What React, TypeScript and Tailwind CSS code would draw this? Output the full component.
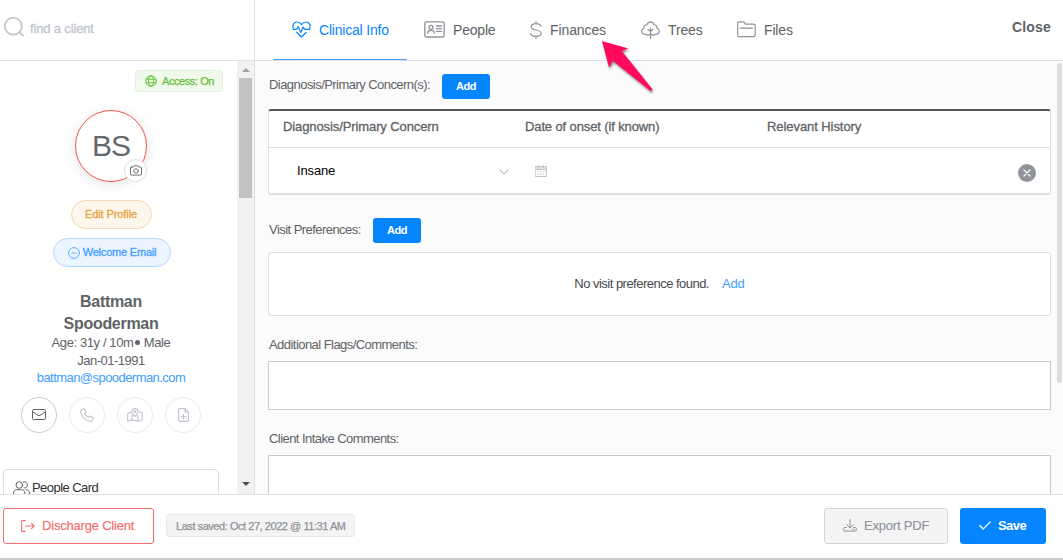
import React from 'react';

interface IconProps {
  className?: string;
}

interface TabItem {
  label: string;
  icon: React.ReactNode;
  className: string;
}

const stroke = {
  fill: 'none',
  stroke: 'currentColor',
  strokeLinecap: 'round' as const,
  strokeLinejoin: 'round' as const
};

const SearchIcon: React.FC<IconProps> = ({ className }) => (
  <svg viewBox="0 0 20 20" className={className} {...stroke} strokeWidth="1.7">
    <circle cx="9.3" cy="9.2" r="8.5" />
    <path d="M15.6 15.3l3.4 3.3" />
  </svg>
);

const HeartPulseIcon: React.FC<IconProps> = ({ className }) => (
  <svg viewBox="0 0 19 17" className={className} {...stroke} strokeWidth="1.2">
    <path d="M1.500 7.300C0 4.500 1.700 1 5 1c2 0 3.500 1 4.500 2.600C10.500 2 12 1 14 1c3.300 0 5 3.500 3.500 6.300M4.700 11.300l4.800 4.700 4.800-4.700" />
    <path d="M1.200 8.300h3.500l1.500-2.800 2.600 6 2.400-5.500 1.500 2.300h5" />
  </svg>
);

const PeopleIcon: React.FC<IconProps> = ({ className }) => (
  <svg viewBox="0 0 21 17" className={className} {...stroke} strokeWidth="1.3">
    <rect x=".8" y=".8" width="19.4" height="15.2" rx="1.6" />
    <circle cx="7" cy="6.3" r="2" />
    <path d="M3.600 12.300c.2-1.900 1.500-2.900 3.400-2.900s3.200 1 3.400 2.900M12.500 5h5M12.500 7.700h5M12.500 10.400h5" />
  </svg>
);

const DollarIcon: React.FC<IconProps> = ({ className }) => (
  <svg viewBox="0 0 12 18" className={className} {...stroke} strokeWidth="1.2">
    <path d="M6 .6v2M6 15.400v2M10.900 5.300C10.400 3.500 8.700 2.600 6 2.600c-3 0-4.800 1.100-4.800 3.100C1.200 7.700 3 8.400 6 9c3.200.6 5.100 1.400 5.100 3.300 0 2-2 3.100-5.100 3.100-3 0-4.800-.9-5.400-2.700" />
  </svg>
);

const TreeIcon: React.FC<IconProps> = ({ className }) => (
  <svg viewBox="0 0 19 18" className={className} {...stroke} strokeWidth="1.2">
    <path d="M8.300 13.500C7.300 14.500 5.700 14.300 5 13.300 2.600 13.800.7 12.200.7 10.300c0-1.500.9-2.600 2.200-3-.3-2 1-3.500 3-3.500C6.500 1.900 7.800.8 9.500.8s3 1.100 3.600 3c2 0 3.300 1.500 3 3.500 1.300.4 2.200 1.500 2.200 3 0 1.900-1.900 3.500-4.300 3-.7 1-2.300 1.200-3.300.2" />
    <path d="M9.500 7v10.400M9.500 10.600L6.900 8.300M9.500 10.600l2.600-2.300" />
  </svg>
);

const FolderIcon: React.FC<IconProps> = ({ className }) => (
  <svg viewBox="0 0 19 17" className={className} {...stroke} strokeWidth="1.2">
    <path d="M.7 14V2.200C.7 1.300 1.300.8 2.100.8h4.700l1.700 2.400h8c1.100 0 1.700.6 1.700 1.600V14c0 1.100-.6 1.700-1.700 1.700h-14C1.300 15.700.7 15.100.7 14zM3.300 7.200h12.300" />
  </svg>
);

const GlobeIcon: React.FC<IconProps> = ({ className }) => (
  <svg viewBox="0 0 12 12" className={className} {...stroke} strokeWidth="1">
    <circle cx="6" cy="6" r="5.300" />
    <ellipse cx="6" cy="6" rx="2.500" ry="5.300" />
    <path d="M1.200 4.200h9.600M1.200 7.800h9.600" />
  </svg>
);

const CameraIcon: React.FC<IconProps> = ({ className }) => (
  <svg viewBox="0 0 12 11" className={className} {...stroke} strokeWidth="0.9">
    <path d="M1.500 2.100h1.700L4 .8h4l.8 1.300h1.700c.6 0 1 .3 1 .9v6.200c0 .6-.4.9-1 .9h-9c-.6 0-1-.3-1-.9V3c0-.6.400-.9 1-.9z" />
    <circle cx="6" cy="5.900" r="2.200" />
  </svg>
);

const MailIcon: React.FC<IconProps> = ({ className }) => (
  <svg viewBox="0 0 14 11" className={className} {...stroke} strokeWidth="1">
    <rect x=".5" y=".5" width="13" height="10" rx="1.200" />
    <path d="M.8 3l5.200 3.400c.7.400 1.300.400 2 0L13.200 3" />
  </svg>
);

const PhoneIcon: React.FC<IconProps> = ({ className }) => (
  <svg viewBox="0 0 14 14" className={className} {...stroke} strokeWidth="1.1">
    <path d="M3.400.8L1.300 1.900C.6 2.300.6 3 .7 3.800c.8 4.700 4.700 8.700 9.500 9.500.8.100 1.500.100 1.900-.600l1.100-2.100c.2-.400.100-.800-.3-1L10.400 8.200c-.4-.2-.8-.1-1.100.2l-.8 1C6.800 8.600 5.400 7.200 4.600 5.500l1-.8c.3-.3.400-.7.200-1.100L4.400 1.100c-.2-.400-.6-.5-1-.3z" />
  </svg>
);

const MapIcon: React.FC<IconProps> = ({ className }) => (
  <svg viewBox="0 0 16 14" className={className} {...stroke} strokeWidth="1.1">
    <path d="M8 8.600C6 6.600 4.900 5.300 4.900 3.800 4.900 2 6.300.6 8 .6s3.100 1.400 3.100 3.200c0 1.500-1.100 2.800-3.100 4.800z" />
    <circle cx="8" cy="3.700" r=".8" />
    <path d="M4 4.300L.7 5.400v7.800l4.300-1.300 6 1.300 4.300-1.200V4.300l-3-.4M5 7v4.900M11 7.500v5.700" />
  </svg>
);

const FileAddIcon: React.FC<IconProps> = ({ className }) => (
  <svg viewBox="0 0 11 14" className={className} {...stroke} strokeWidth="1.1">
    <path d="M.6 12.200V1.800C.6 1 1 .6 1.800.6H7l3.400 3.500v8.100c0 .8-.4 1.200-1.200 1.200H1.800C1 13.400.6 13 .6 12.200zM7 .8v3.500h3.300M5.500 6.300v4.800M3.100 8.700h4.800" />
  </svg>
);

const UsersIcon: React.FC<IconProps> = ({ className }) => (
  <svg viewBox="0 0 17 14" className={className} {...stroke} strokeWidth="1">
    <circle cx="6.300" cy="4" r="3.300" />
    <path d="M.6 13.500V12C.6 9.800 2 8.700 4 8.700h4.500c2 0 3.400 1.100 3.400 3.300v1.500M10.400.9c2-.6 4 .7 4 2.900 0 1.800-1.300 3.200-3.100 3.200M13 8.700c2.200.1 3.400 1.300 3.400 3.300v1.500" />
  </svg>
);

const CalendarIcon: React.FC<IconProps> = ({ className }) => (
  <svg viewBox="0 0 12 12" className={className} {...stroke} strokeWidth="1">
    <rect x=".5" y="1.500" width="11" height="10" />
    <path d="M.5 4.500h11M1 3h10M3.500.5v2M8.500.5v2" />
    <path d="M2.500 6.800h7M2.500 9.200h7" strokeDasharray="1.500 1.200" strokeLinecap="butt" />
  </svg>
);

const ExitIcon: React.FC<IconProps> = ({ className }) => (
  <svg viewBox="0 0 14 12" className={className} {...stroke} strokeWidth="1.100">
    <path d="M4.200.6H1.600c-.6 0-1 .4-1 1v8.800c0 .6.400 1 1 1h2.600M4.500 6h8.700M10.500 3.300L13.200 6l-2.700 2.700" />
  </svg>
);

const ExportIcon: React.FC<IconProps> = ({ className }) => (
  <svg viewBox="0 0 14 13" className={className} {...stroke} strokeWidth="1">
    <path d="M7 .5v8.300M3.800 5.700L7 8.900l3.200-3.200M3.500 8.500H1.800c-.7 0-1.200.5-1.200 1.200v1.200c0 .7.500 1.200 1.200 1.200h10.400c.7 0 1.200-.5 1.200-1.200V9.700c0-.7-.5-1.200-1.200-1.200h-1.700M9.700 10.300h1.500" />
  </svg>
);

const tabs: TabItem[] = [
  { label: 'Clinical Info', icon: <HeartPulseIcon className="h-[17px] w-[19px]" />, className: 'w-[134px] pl-[19px] text-[#0a84ff] border-[#409eff] tracking-[-0.2px]' },
  { label: 'People', icon: <PeopleIcon className="h-[17px] w-[21px] text-[#909399]" />, className: 'w-[106px] pl-[17px] border-transparent tracking-[-0.2px]' },
  { label: 'Finances', icon: <DollarIcon className="h-[18px] w-3 text-[#909399]" />, className: 'w-[111px] pl-[17px] border-transparent tracking-[-0.1px]' },
  { label: 'Trees', icon: <TreeIcon className="h-[18px] w-[19px] text-[#909399]" />, className: 'w-24 pl-[17px] border-transparent tracking-[-0.15px]' },
  { label: 'Files', icon: <FolderIcon className="h-[17px] w-[19px] text-[#909399]" />, className: 'w-[91px] pl-[17px] border-transparent tracking-[-0.15px]' }
];

const contactActions = [
  { name: 'mail', icon: <MailIcon className="h-[11px] w-3.5" />, className: 'border-[#c8cad3] text-[#606266]' },
  { name: 'phone', icon: <PhoneIcon className="size-3.5" />, className: 'border-[#e8eaf2] text-[#c0c4cc]' },
  { name: 'map', icon: <MapIcon className="h-3.5 w-4" />, className: 'border-[#e8eaf2] text-[#c0c4cc]' },
  { name: 'file', icon: <FileAddIcon className="h-3.5 w-[11px]" />, className: 'border-[#e8eaf2] text-[#c0c4cc]' }
];

const AddButton: React.FC = () => (
  <button className="h-[25px] w-12 rounded-[3px] bg-[#0585ff] text-[11px] font-bold tracking-[-0.5px] text-white">
    Add
  </button>
);

const Sidebar: React.FC = () => (
  <aside className="flex min-h-0 flex-1">
    <div className="flex w-[237px] flex-col overflow-hidden">
      <div className="mt-[9px] ml-[135px] flex h-[22px] w-[88px] shrink-0 items-center rounded-[3px] border border-[#e1f3d8] bg-[#f0f9eb] pl-[9px] text-[11px] tracking-[-0.43px] text-[#67c23a] [-webkit-text-stroke:0.25px]">
        <GlobeIcon className="mr-[5px] size-3" />
        Access: On
      </div>

      <div className="flex w-[222px] shrink-0 flex-col items-center">
        <div className="relative mt-[18px] flex size-[72px] items-center justify-center rounded-full border border-[#f9554a] bg-white pb-0.5 text-[30px] tracking-[-1px] text-[#66686b] shadow-[0_2px_12px_rgba(0,0,0,0.12)]">
          BS
          <span className="absolute -right-px -bottom-px flex size-[23px] items-center justify-center rounded-full border border-[#dcdfe6] bg-white">
            <CameraIcon className="h-[11px] w-3" />
          </span>
        </div>
        <button className="mt-[18px] h-[29px] w-[81px] rounded-full border border-[#f5dab1] bg-[#fdf6ec] text-[11px] tracking-[-0.1px] text-[#e6a23c] [-webkit-text-stroke:0.3px]">
          Edit Profile
        </button>
        <button className="mt-[9px] ml-0.5 flex h-[29px] w-[118px] items-center justify-center rounded-full border border-[#b3d8ff] bg-[#ecf5ff] text-[11px] tracking-[-0.2px] text-[#409eff] [-webkit-text-stroke:0.3px]">
          <svg viewBox="0 0 12 12" className="mr-[3px] size-3" {...stroke} strokeWidth="0.8">
            <circle cx="6" cy="6" r="5.400" />
            <path d="M3.700 6h4.600" />
          </svg>
          Welcome Email
        </button>

        <h2 className="mt-6 text-center text-base leading-[22px] font-bold tracking-[-0.3px]">
          Battman
          <br />
          Spooderman
        </h2>
        <div className="-mt-px text-center text-[13px] leading-[17.5px] tracking-[-0.4px]">
          <p>
            Age: 31y / 10m <span className="mx-[-1.5px] inline-block size-[5px] rounded-full bg-[#606266] align-[2px]" />{' '}
            <span className="ml-0.5">Male</span>
          </p>
          <p className="tracking-[-0.5px]">Jan-01-1991</p>
          <p className="tracking-[-0.55px] text-[#409eff]">battman@spooderman.com</p>
        </div>

        <div className="mt-[10px] flex gap-3">
          {contactActions.map((action) => (
            <button key={action.name} className={`flex size-9 items-center justify-center rounded-full border ${action.className}`}>
              {action.icon}
            </button>
          ))}
        </div>
      </div>

      <div className="mt-9 ml-[3px] flex h-12 w-[216px] shrink-0 rounded border border-[#dcdfe6] bg-white pt-[9px] pl-[9px] text-[13px] leading-[18px] tracking-[-0.55px] text-[#303133]">
        <UsersIcon className="mt-0.5 mr-0.5 h-3.5 w-[17px] text-[#606266]" />
        People Card
      </div>
    </div>

    {/* Scrollbar */}
    <div className="flex w-[17px] flex-col items-center bg-[#f1f1f1]">
      <svg viewBox="0 0 8 4" className="mt-[7px] mb-1.5 h-1 w-2 shrink-0" fill="#a3a3a3">
        <path d="M0 4l4-4 4 4z" />
      </svg>
      <div className="h-[120px] w-[13px] shrink-0 bg-[#c1c1c1]" />
      <svg viewBox="0 0 8 4" className="mt-auto mb-2 h-1 w-2 shrink-0" fill="#505050">
        <path d="M0 0l4 4 4-4z" />
      </svg>
    </div>
  </aside>
);

const ClinicalInfo: React.FC = () => (
  <main className="flex min-h-0 flex-1 justify-between overflow-hidden bg-[#fbfbfb]">
    <div className="ml-[13px] w-[783px] text-[13px] tracking-[-0.55px]">
      <div className="mt-[13px] flex h-[25px] items-center gap-3">
        <span className="w-[162px] pb-[3px] pl-px whitespace-nowrap">Diagnosis/Primary Concern(s):</span>
        <AddButton />
      </div>

      <div className="mt-[10px] h-[86px] rounded-[3px] border border-t-2 border-b-2 border-[#dfe0e2] border-t-[#545557] bg-white tracking-[-0.07px]">
        <div className="flex h-[37px] border-b border-[#dfe0e2] pl-3.5 leading-[31px] [-webkit-text-stroke:0.3px]">
          <span className="w-[242px] tracking-[-0.1px]">Diagnosis/Primary Concern</span>
          <span className="w-[242px] tracking-[-0.12px]">Date of onset (if known)</span>
          <span>Relevant History</span>
        </div>
        <div className="flex h-[45px] items-center pl-7">
          <span className="w-[202px] tracking-[-0.15px] text-black">Insane</span>
          <svg viewBox="0 0 10 6" className="mt-0.5 h-1.5 w-2.5 text-[#c0c4cc]" {...stroke} strokeWidth="1.1">
            <path d="M.6.6L5 5 9.400.6" />
          </svg>
          <CalendarIcon className="ml-[26px] size-3 text-[#c0c4cc]" />
          <button className="mt-[5px] mr-3.5 ml-auto flex size-[18px] items-center justify-center rounded-full bg-[#909399]">
            <svg viewBox="0 0 8 8" className="size-2 text-white" {...stroke} strokeWidth="1.3">
              <path d="M1 1l6 6M7 1L1 7" />
            </svg>
          </button>
        </div>
      </div>

      <div className="mt-[23px] flex h-[25px] items-center gap-3">
        <span className="w-[93px] pb-0.5 pl-px whitespace-nowrap">Visit Preferences:</span>
        <AddButton />
      </div>
      <div className="mt-[9px] flex h-16 items-center justify-center rounded-[3px] border border-[#dfe0e2] bg-white tracking-[-0.52px] text-[#484a4d]">
        No visit preference found.
        <a className="ml-[13px] tracking-[-0.15px] text-[#409eff]">Add</a>
      </div>

      <label className="mt-5 block pl-px leading-[18px]">Additional Flags/Comments:</label>
      <textarea className="mt-[7px] block h-[49px] w-full resize-none border border-[#c8c9cc] bg-white" />
      <label className="mt-5 block pl-px leading-[18px]">Client Intake Comments:</label>
      <textarea className="mt-[7px] block h-[49px] w-full resize-none border border-[#c8c9cc] bg-white" />
    </div>
    <div className="mt-0.5 mr-px h-80 w-[5px] rounded-full bg-[#dcdde0]" />
  </main>
);

const Footer: React.FC = () => (
  <footer className="flex h-16 shrink-0 items-center border-t border-[#dfe0e2] bg-white pb-0.5 pl-[3px] text-[13px]">
    <button className="flex h-9 w-[151px] items-center rounded-[3px] border border-[#f56c6c] pl-[17px] tracking-[-0.2px] text-[#f56c6c] [-webkit-text-stroke:0.15px]">
      <ExitIcon className="mr-[7px] h-3 w-3.5" />
      Discharge Client
    </button>
    <div className="ml-3 flex h-[23px] w-[189px] items-center rounded-[3px] border border-[#e9e9eb] bg-[#f4f4f5] pt-px pl-[9px] text-[11px] tracking-[-0.45px] whitespace-nowrap text-[#909399] [-webkit-text-stroke:0.25px]">
      Last saved: Oct 27, 2022 @ 11:31 AM
    </div>
    <button className="ml-auto flex h-9 w-[124px] items-center rounded-[3px] border border-[#d3d4d6] bg-[#f4f4f5] pl-[18px] tracking-[-0.2px] text-[#909399] [-webkit-text-stroke:0.15px]">
      <ExportIcon className="mr-[7px] h-[13px] w-3.5" />
      Export PDF
    </button>
    <button className="mr-[17px] ml-3 flex h-9 w-[86px] items-center rounded-[3px] bg-[#0585ff] pl-[19px] font-bold tracking-[-0.55px] text-white">
      <svg viewBox="0 0 12 9" className="mr-[7px] h-[9px] w-3" {...stroke} strokeWidth="1.2">
        <path d="M.7 4.500L4.200 8 11.300.8" />
      </svg>
      Save
    </button>
  </footer>
);

const App: React.FC = () => {
  return (
    <div className="relative flex h-[560px] w-[1063px] flex-col overflow-hidden bg-white font-['Liberation_Sans',Arial,sans-serif] text-[13px] text-[#606266]">
      <div className="flex min-h-0 flex-1">
        <div className="flex w-[255px] flex-col border-r border-[#dfe0e2]">
          <div className="flex h-[61px] shrink-0 items-center border-b border-[#dfe0e2] pb-1 pl-1 text-[#c0c4cc]">
            <SearchIcon className="mr-1.5 mb-0.5 size-5" />
            <span className="pt-0.5 tracking-[-0.15px] [-webkit-text-stroke:0.3px]">find a client</span>
          </div>
          <Sidebar />
        </div>

        <div className="flex min-w-0 flex-1 flex-col">
          <header className="flex h-[61px] shrink-0 justify-between border-b border-[#dfe0e2] pl-[18px]">
            <nav className="flex text-sm">
              {tabs.map((tab) => (
                <a key={tab.label} className={`flex h-[60px] items-center gap-2 border-b ${tab.className}`}>
                  {tab.icon}
                  {tab.label}
                </a>
              ))}
            </nav>
            <button className="mr-3 h-[54px] text-sm font-bold tracking-[0.2px]">Close</button>
          </header>
          <ClinicalInfo />
        </div>
      </div>

      <Footer />
      <div className="h-0.5 shrink-0 bg-[#c9cacc]" />

      {/* Pointer to the Finances tab */}
      <svg viewBox="0 0 60 60" className="absolute top-[38px] left-[598px] size-[60px] drop-shadow-[1px_2px_1px_rgba(0,0,0,0.45)]">
        <path d="M4 3l26.300 7.400-6.500 2.500L54.400 51.200 52.500 53 14.700 22.800 11 29.500z" fill="#ff0a5c" />
      </svg>
    </div>
  );
};

export default App;
